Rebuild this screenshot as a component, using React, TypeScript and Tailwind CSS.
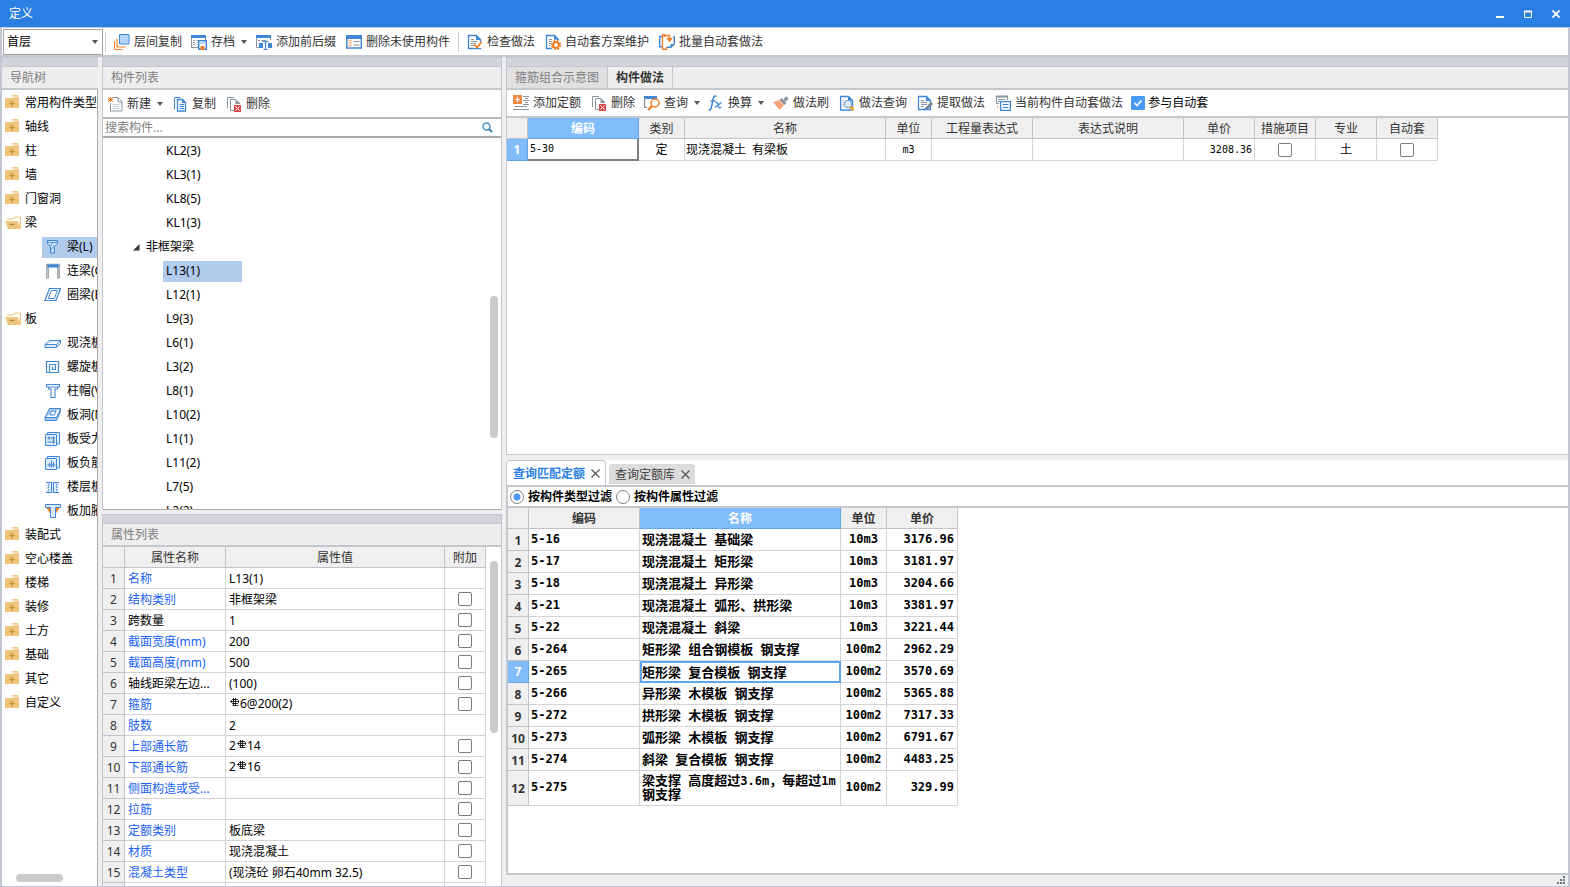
import React from "react";

const UI = "font-['Noto_Sans','Noto_Sans_CJK_SC',sans-serif]";

/* ---------- icons ---------- */

function Svg({ children, w = 16, h = 16 }: { children: React.ReactNode; w?: number; h?: number }) {
  return (
    <svg width={w} height={h} viewBox={`0 0 ${w} ${h}`} fill="none" className="shrink-0" aria-hidden="true">
      {children}
    </svg>
  );
}

const B = "#3f86d6";
const O = "#f07c24";
const G = "#8a949c";

const LayerCopyIcon = () => (
  <Svg>
    <path d="M.5 7v8.500h8" stroke={O} />
    <path d="M3 5v8h8.500" stroke={O} strokeWidth="1.200" />
    <path d="M5.500.5h9.500v9.500H5.500z" fill="#b5d6fb" stroke={B} />
  </Svg>
);
const ArchiveIcon = () => (
  <Svg>
    <path d="M.5 2v11.500H7M14.500 3v3" stroke={G} />
    <path d="M0 1h15v3H0z" fill={B} />
    <path d="M2 6.500h2M5.500 6.500h6M2 8.500h2M5.500 8.500h1M2 10.500h2M5.500 10.500h1" stroke={G} />
    <path d="M7.700 6.700h7.600v8.600H7.700z" fill="#fff" stroke={B} strokeWidth="1.400" />
    <path d="M9 7h5v3H9z" fill="#b5d6fb" />
    <path d="M9.500 12h4v4h-4z" fill={O} />
  </Svg>
);
const AffixIcon = () => (
  <Svg>
    <path d="M.5 2v11.500H3M14.500 3v3" stroke={G} />
    <path d="M0 1h15v3H0z" fill={B} />
    <path d="M2 6.500h2M5.500 6.500h5" stroke={G} />
    <path d="M3 9h4v5H3zM12 9h4v5h-4z" fill={B} />
    <path d="M6.500 7.500h2l1 1 1-1h2M9.500 8v7M7.500 15.500h4" stroke={B} strokeWidth="1.200" />
  </Svg>
);
const UnusedIcon = () => (
  <Svg>
    <path d="M.7 2v12h14.600V2" stroke={B} strokeWidth="1.400" />
    <path d="M0 1h16v4H0z" fill={B} />
    <path d="M2.500 6.500h3M2.500 9h3M2.500 11.500h3" stroke={O} strokeWidth="1.500" strokeDasharray="1 1" />
    <path d="M7.500 7.500h6M7.500 11h6" stroke={G} />
  </Svg>
);
const DocBase = () => (
  <>
    <path d="M1.500 1.500h8l4 4v9h-12z" fill="#fff" stroke={B} strokeWidth="1.300" />
    <path d="M9 1l5 5H9z" fill={B} />
    <path d="M4 5.500h3M4 7.500h6M4 9.500h6M4 11.500h3" stroke={G} />
  </>
);
const CheckDocIcon = () => (
  <Svg>
    <DocBase />
    <path d="M7 8h9v6H7z" fill="#fff" />
    <path d="M7 7.500h3M7 9.500h2" stroke={G} />
    <path d="M7.500 10.500l2.500 3 4.500-5.500" stroke={O} strokeWidth="1.800" />
  </Svg>
);
const GearDocIcon = () => (
  <Svg>
    <DocBase />
    <circle cx="11" cy="11" r="5.500" fill="#fff" />
    <circle cx="11" cy="11" r="4.200" stroke={O} strokeWidth="1.800" strokeDasharray="1.900 1.400" />
    <circle cx="11" cy="11" r="2.900" stroke={O} strokeWidth="1.800" />
  </Svg>
);
const BatchIcon = () => (
  <Svg>
    <path d="M3 2.500H.7v10.300H3" stroke={B} strokeWidth="1.400" />
    <path d="M5.500 3V.8h-2v14.400h4V13" stroke={O} strokeWidth="1.400" />
    <path d="M8 13.200h4l3.300-3.200V3H14" stroke={B} strokeWidth="1.400" />
    <path d="M5 1.500h5.500V6M8 4l2.500 3L13 4" stroke={O} strokeWidth="1.600" />
    <path d="M11.500 13.500V10H15z" fill={B} />
  </Svg>
);
const NewIcon = () => (
  <Svg>
    <path d="M6 1.500h5l4 4v9.500H3.500V7" fill="#fff" stroke={G} />
    <path d="M11 1.500V6h4" stroke={G} />
    <path d="M5.500 8.500h7M5.500 10.500h7M5.500 12.500h7" stroke="#c5ccd1" />
    <path d="M1 1l5 5M6 1L1 6M3.500 1v5M1 3.500h5" stroke={O} strokeWidth=".9" />
  </Svg>
);
const CopyIcon = () => (
  <Svg>
    <path d="M2.500 13.500v-12h6" stroke={B} />
    <path d="M5.500 3.500h5l3 3v8.500h-8z" fill="#fff" stroke={B} strokeWidth="1.300" />
    <path d="M10 3l4 4h-4z" fill={B} />
    <path d="M7.500 8.500h4.500M7.500 10.500h4.500M7.500 12.500h4.500" stroke={B} />
  </Svg>
);
const DeleteIcon = () => (
  <Svg>
    <path d="M1.500 12V1.500H8" stroke={G} />
    <path d="M8 14.500H4.500v-11H10L13.500 7v1" stroke={G} />
    <path d="M9.500 3.500L14 8H9.500z" fill={G} />
    <path d="M8 9h7v7H8z" fill="#d9494b" />
    <path d="M9.500 10.500l4 4M13.500 10.500l-4 4" stroke="#fff" />
  </Svg>
);
const AddQuotaIcon = () => (
  <Svg>
    <path d="M0 0h9v9H0z" fill="#ee8b45" />
    <path d="M2 4.500h5M4.500 2v5" stroke="#fff" strokeWidth="1.200" />
    <path d="M10 1.500h6M12 3.500h3M10 5.500h6M12 7.500h3M10 9.500h6M2 11.500h12M0 14.500h16" stroke={G} />
  </Svg>
);
const QueryIcon = () => (
  <Svg>
    <path d="M0 1h13v3H0z" fill={B} />
    <path d="M.6 3v9.400H3" stroke={G} strokeWidth="1.200" />
    <circle cx="11" cy="8" r="4" fill="#fff" stroke={O} strokeWidth="1.500" />
    <path d="M8 11l-4 4" stroke={O} strokeWidth="2.400" />
  </Svg>
);
const FxIcon = () => (
  <Svg>
    <path d="M8.500 1.500C6.800.2 5.600 1.500 5 4.500L3.500 12C3 14.500 2 15.500.5 14.700M2.500 6h5" stroke={B} strokeWidth="1.500" />
    <path d="M7.500 8c2-1.500 2.200.5 2.700 2.500s1 3 3 1.500M13.500 7.500L7 12.500" stroke={B} strokeWidth="1.300" />
  </Svg>
);
const BrushIcon = () => (
  <Svg>
    <path d="M0 7l6-2 5 5-4.500 5z" fill="#f4a27c" />
    <path d="M6.500 5L8.500 3l5 5-2 2z" fill={G} />
    <path d="M11.500 5.500l3-3" stroke={G} strokeWidth="3.200" />
  </Svg>
);
const QueryDocIcon = () => (
  <Svg>
    <path d="M1.600 1.500h7.900l4 4V15H1.600z" fill="#fff" stroke={B} strokeWidth="1.300" />
    <path d="M9 1l5 5H9z" fill={B} />
    <path d="M3.500 5.500h1M3.500 7.500h1M3.500 9.500h1M3.500 11.500h1" stroke={G} />
    <circle cx="9" cy="9" r="3.800" fill="#d9eafc" stroke="#7a97c4" />
    <path d="M11.500 12l3 3" stroke="#f5a623" strokeWidth="2.800" />
  </Svg>
);
const ExtractIcon = () => (
  <Svg>
    <DocBase />
    <path d="M8 15l1-3 5-5 2 2-5 5z" fill="#74818b" />
    <path d="M7 15.500l1-3 2 2z" fill={B} />
  </Svg>
);
const CurrentIcon = () => (
  <Svg>
    <path d="M1.500 1v7.500H4M12.500 1v4" stroke={G} />
    <path d="M1 1.500h12" stroke={G} strokeWidth="2" />
    <path d="M3 4.500h7M3 6.500h2" stroke={G} />
    <path d="M5.600 6.600h9.800v8.800H5.600z" fill="#fff" stroke={B} strokeWidth="1.200" />
    <path d="M7.500 9.500h6M7.500 12.500h6" stroke={B} />
    <path d="M2.500 10.500v2.500h2" stroke={O} strokeDasharray="1 1" />
  </Svg>
);

const FolderClosed = () => (
  <Svg>
    <path d="M8 0h4.500l1.500 1.500H6.500z" fill="#efc67c" />
    <path d="M0 3h7l1-.8h6V13H0z" fill="#efc67c" />
    <path d="M4 8.500h6M7 5.500v6" stroke="#c99a3c" strokeWidth="1.400" />
  </Svg>
);
const FolderOpen = () => (
  <Svg>
    <path d="M2 4.500l7-1L10 2h5.500v11" stroke="#efc67c" />
    <path d="M0 6h13l2 8H3z" fill="#efc67c" />
    <path d="M15.500 3v11h-2z" fill="#efc67c" />
    <path d="M4.500 9.500h5" stroke="#b98a2d" strokeWidth="1.200" />
  </Svg>
);

const PALE = "#dcebfb";
const shapes: Record<string, React.ReactNode> = {
  beam: (
    <>
      <path d="M3.500 1.500h10v3l-3 3v6.500h-4V7.500l-3-3z" fill="#c4dcf6" stroke={B} />
      <path d="M4 3.500h9M6.500 7l3-4M7 11l3-4" stroke={B} strokeWidth=".7" />
    </>
  ),
  link: (
    <>
      <path d="M3.500 15.500V2h11v13.500" stroke={G} strokeWidth="2.600" />
      <path d="M3.500 15V2h11v13" stroke="#c9ced2" strokeWidth=".8" />
      <path d="M3.500 1.500h11v3h-11z" fill={B} />
    </>
  ),
  ring: (
    <>
      <path d="M5.500 1.500h11l-4.500 12H1z" fill="#fff" stroke={B} strokeWidth="1.200" />
      <path d="M7.500 3.500h6l-3.300 8h-6z" stroke={B} />
    </>
  ),
  slab: <path d="M1 9.500l4.500-4h11v3l-4 4H1zM1 9.500h11.500l4-4M12.500 9.500v3" fill={PALE} stroke={B} strokeLinejoin="round" />,
  spiral: <path d="M2.500 14V2.500h12v11h-9v-8h6v5h-3v-3M2 13.500h3" stroke={B} strokeWidth="1.200" />,
  cap: <path d="M2.500 1.500h13v2.500h-13zM4.500 4v2h2.500v8.500h4V6h2.500V4" fill="#fff" stroke={B} strokeWidth="1.100" />,
  hole: (
    <>
      <path d="M5.500 1.500h11l-4 9H1zM1 10.500v3h11.500l4-9v-3" fill="#a9c9ee" stroke={B} />
      <path d="M7.500 4h4.500l-1.500 4H6z" fill="#fff" stroke={B} />
    </>
  ),
  force: (
    <>
      <path d="M1.500 3.500h11v11h-11zM3.500 3V1.500h12v11.500H13" fill={PALE} stroke={B} />
      <path d="M3.500 7h7.500M3.500 11h7.500M5 5.500v3M9.500 5.500v7" stroke={B} strokeWidth="1.200" />
    </>
  ),
  negative: (
    <>
      <path d="M1.500 3.500h11v11h-11zM3.500 3V1.500h12v11.500H13" fill={PALE} stroke={B} />
      <path d="M3.500 10h8M5.500 8v4M7.500 5.500v7M9.500 7v5" stroke={B} />
    </>
  ),
  strip: (
    <>
      <path d="M2 3h13v11H2z" fill={PALE} />
      <path d="M2 3.500h5.500M9.500 3.500H15M2 13.500h5.500M9.500 13.500H15M7.500 3v11M9.500 3v11" stroke={B} />
      <path d="M4.500 5v8M12.500 5v8" stroke={B} strokeDasharray="1.500 1" />
    </>
  ),
  haunch: (
    <>
      <path d="M3 5l4 6V5zM15 5l-4 6V5z" fill="#f08020" stroke="#f08020" />
      <path d="M1.500 1.500h15v3h-5v10h-5v-10h-5z" fill={PALE} stroke={B} />
    </>
  ),
};

const Caret = () => (
  <svg width="6" height="4" viewBox="0 0 6 4" className="ml-0.5 shrink-0" aria-hidden="true">
    <path d="M0 0h6L3 4z" fill="#555" />
  </svg>
);

/* ribbed bar diameter mark */
const Rebar = () => (
  <svg width="11" height="12" viewBox="0 0 11 12" fill="none" className="mb-1 inline-block" role="img" aria-label="HRB400">
    <path d="M3.500 2.500h5l1 1v2l-1 1h-5l-1-1v-2z" stroke="#000" strokeWidth=".9" />
    <path d="M4.500 1v8M6.500 1v8M1 4.500h9M3.500 8.500h6" stroke="#000" strokeWidth=".8" />
  </svg>
);

/* ---------- shared pieces ---------- */

function ToolButton({ icon, label, menu }: { icon: React.ReactNode; label: string; menu?: boolean }) {
  return (
    <button
      type="button"
      className={`flex h-5 shrink-0 items-center gap-1 whitespace-nowrap rounded-sm text-[#333] hover:bg-[#e6f0fc] ${menu ? "px-1" : "px-[5px]"}`}
    >
      {icon}
      <span>{label}</span>
      {menu && <Caret />}
    </button>
  );
}

const Divider = () => <div className="mx-[3px] h-5 w-px shrink-0 bg-[#cfcfcf]" />;
const Strip = () => <div className="h-2.5 shrink-0 border-y border-[#c3c7ce] bg-[#d3d4da]" />;

function PanelTitle({ children }: { children: React.ReactNode }) {
  return (
    <h2 className="flex h-[23px] shrink-0 items-center border-b-2 border-[#c3c7ce] bg-[#eee] px-2 pt-px font-normal text-[#808080]">
      {children}
    </h2>
  );
}

const Tick = ({ label }: { label: string }) => (
  <input
    type="checkbox"
    aria-label={label}
    className="mx-auto block size-3.5 appearance-none rounded-[2px] border border-[#7d7d7d] bg-white checked:bg-[#4a9af5]"
  />
);

/* Latin runs are set in a fixed-width face beside the Chinese text */
function Mixed({ text, small }: { text: string; small: string }) {
  return (
    <>
      {text.split(/([\x20-\x7e]+)/).map((part, i) =>
        i % 2 ? (
          <span key={i} className={`whitespace-pre font-['DejaVu_Sans_Mono',monospace] leading-none ${small}`}>
            {part}
          </span>
        ) : (
          part
        ),
      )}
    </>
  );
}

/* ---------- data ---------- */

type NavItem = { label: string; open?: boolean; children?: [string, string][] };

const nav: NavItem[] = [
  { label: "常用构件类型" },
  { label: "轴线" },
  { label: "柱" },
  { label: "墙" },
  { label: "门窗洞" },
  { label: "梁", open: true, children: [["beam", "梁(L)"], ["link", "连梁(G)"], ["ring", "圈梁(E)"]] },
  {
    label: "板",
    open: true,
    children: [
      ["slab", "现浇板"],
      ["spiral", "螺旋板"],
      ["cap", "柱帽(V)"],
      ["hole", "板洞(N)"],
      ["force", "板受力"],
      ["negative", "板负筋"],
      ["strip", "楼层板"],
      ["haunch", "板加腋"],
    ],
  },
  { label: "装配式" },
  { label: "空心楼盖" },
  { label: "楼梯" },
  { label: "装修" },
  { label: "土方" },
  { label: "基础" },
  { label: "其它" },
  { label: "自定义" },
];

const frameBeams = ["KL2(3)", "KL3(1)", "KL8(5)", "KL1(3)"];
const plainBeams = ["L13(1)", "L12(1)", "L9(3)", "L6(1)", "L3(2)", "L8(1)", "L10(2)", "L1(1)", "L11(2)", "L7(5)", "L2(2)"];

const props: [string, React.ReactNode, boolean, boolean][] = [
  ["名称", "L13(1)", true, false],
  ["结构类别", "非框架梁", true, true],
  ["跨数量", "1", false, true],
  ["截面宽度(mm)", "200", true, true],
  ["截面高度(mm)", "500", true, true],
  ["轴线距梁左边...", "(100)", false, true],
  ["箍筋", <><Rebar />6@200(2)</>, true, true],
  ["肢数", "2", true, false],
  ["上部通长筋", <>2<Rebar />14</>, true, true],
  ["下部通长筋", <>2<Rebar />16</>, true, true],
  ["侧面构造或受...", "", true, true],
  ["拉筋", "", true, true],
  ["定额类别", "板底梁", true, true],
  ["材质", "现浇混凝土", true, true],
  ["混凝土类型", "(现浇砼 卵石40mm 32.5)", true, true],
];

const quotas: [string, string, string, string][] = [
  ["5-16", "现浇混凝土 基础梁", "10m3", "3176.96"],
  ["5-17", "现浇混凝土 矩形梁", "10m3", "3181.97"],
  ["5-18", "现浇混凝土 异形梁", "10m3", "3204.66"],
  ["5-21", "现浇混凝土 弧形、拱形梁", "10m3", "3381.97"],
  ["5-22", "现浇混凝土 斜梁", "10m3", "3221.44"],
  ["5-264", "矩形梁 组合钢模板 钢支撑", "100m2", "2962.29"],
  ["5-265", "矩形梁 复合模板 钢支撑", "100m2", "3570.69"],
  ["5-266", "异形梁 木模板 钢支撑", "100m2", "5365.88"],
  ["5-272", "拱形梁 木模板 钢支撑", "100m2", "7317.33"],
  ["5-273", "弧形梁 木模板 钢支撑", "100m2", "6791.67"],
  ["5-274", "斜梁 复合模板 钢支撑", "100m2", "4483.25"],
  ["5-275", "梁支撑 高度超过3.6m，每超过1m\n钢支撑", "100m2", "329.99"],
];

const head = "border-b border-r border-[#c3c3c7] bg-[#efefef] p-0 pt-px font-normal text-[#333]";
const cell = "border-b border-r border-[#d4d4d4] p-0";
const activeHead = "border-b border-r border-[#62a5ea] bg-[#80bbfa] p-0 pt-px text-white";

/* ---------- panels ---------- */

function NavPanel() {
  return (
    <nav className="flex w-[96px] shrink-0 flex-col">
      <Strip />
      <PanelTitle>导航树</PanelTitle>
      <div className="relative min-h-0 flex-1 overflow-hidden border-r border-[#a9a9a9] bg-white pt-px">
        <ul>
          {nav.map((n) => (
            <li key={n.label}>
              <button type="button" className="flex h-6 w-full items-center gap-1 whitespace-nowrap pl-[3px] text-black">
                {n.open ? <FolderOpen /> : <FolderClosed />}
                {n.label}
              </button>
              {n.children && (
                <ul>
                  {n.children.map(([shape, label]) => (
                    <li key={label} className="flex h-6 items-center pl-10">
                      <button
                        type="button"
                        className={`flex h-[21px] flex-1 items-center gap-1.5 whitespace-nowrap pl-0.5 text-black ${shape === "beam" ? "bg-[#b1cbed]" : ""}`}
                      >
                        <Svg w={17}>{shapes[shape]}</Svg>
                        {label}
                      </button>
                    </li>
                  ))}
                </ul>
              )}
            </li>
          ))}
        </ul>
        <div className="absolute bottom-1 left-3.5 h-2 w-[47px] rounded-full bg-[#cbcbcb]" />
      </div>
    </nav>
  );
}

function ComponentPanel() {
  return (
    <section className="flex h-[453px] shrink-0 flex-col border-x border-[#c3c7ce]">
      <Strip />
      <PanelTitle>构件列表</PanelTitle>
      <div className="flex h-[27px] shrink-0 items-center bg-white">
        <ToolButton icon={<NewIcon />} label="新建" menu />
        <ToolButton icon={<CopyIcon />} label="复制" />
        <ToolButton icon={<DeleteIcon />} label="删除" />
      </div>
      <label className="flex h-[21px] shrink-0 items-center border-b-2 border-t-2 border-b-[#a9a9a9] border-t-[#b4b6ba] bg-white pr-2">
        <input
          type="text"
          aria-label="搜索构件"
          placeholder="搜索构件..."
          className="min-w-0 flex-1 pl-0.5 leading-4 outline-none placeholder:text-[#808080]"
        />
        <svg width="11" height="11" viewBox="0 0 11 11" fill="none" aria-hidden="true">
          <circle cx="4.500" cy="4.500" r="3.500" stroke="#3d95c9" strokeWidth="1.500" />
          <path d="M7 7l3 3" stroke="#2d7fb4" strokeWidth="2" />
        </svg>
      </label>
      <div className="relative min-h-0 flex-1 overflow-hidden border-b border-[#a9a9a9] bg-white pt-px text-black">
        <ul>
          {frameBeams.map((b) => (
            <li key={b} className="flex h-6 items-center pl-[60px]">
              <button type="button" className="h-[21px] w-[79px] pl-[3px] text-left">{b}</button>
            </li>
          ))}
          <li>
            <button type="button" className="flex h-6 items-center gap-1.5 pl-[30px]">
              <svg width="7" height="7" viewBox="0 0 7 7" aria-hidden="true">
                <path d="M6.500 0v6.500H0z" fill="#333" />
              </svg>
              非框架梁
            </button>
            <ul>
              {plainBeams.map((b, i) => (
                <li key={b} className="flex h-6 items-center pl-[60px]">
                  <button type="button" className={`h-[21px] w-[79px] pl-[3px] text-left ${i === 0 ? "bg-[#b1cbed]" : ""}`}>
                    {b}
                  </button>
                </li>
              ))}
            </ul>
          </li>
        </ul>
        <div className="absolute right-[3px] top-[158px] h-[142px] w-2 rounded-full bg-[#cbcbcb]" />
      </div>
    </section>
  );
}

function PropertyPanel() {
  return (
    <section className="flex min-h-0 flex-1 flex-col border-x border-[#c3c7ce]">
      <Strip />
      <PanelTitle>属性列表</PanelTitle>
      <div className="flex min-h-0 flex-1 overflow-hidden bg-white">
        <div className="min-w-0 flex-1">
          <table className="w-full table-fixed border-separate border-spacing-0">
            <colgroup>
              <col className="w-[22px]" />
              <col className="w-[101px]" />
              <col />
              <col className="w-[41px]" />
            </colgroup>
            <thead>
              <tr className="h-[21px]">
                <th className={head} />
                <th className={head}>属性名称</th>
                <th className={head}>属性值</th>
                <th className={head}>附加</th>
              </tr>
            </thead>
            <tbody>
              {props.map(([name, value, blue, extra], i) => (
                <tr key={name} className="h-[21px]">
                  <th className={head}>{i + 1}</th>
                  <td className={`${cell} whitespace-nowrap pl-[3px] pt-px ${blue ? "text-[#1a5ff5]" : "text-black"}`}>{name}</td>
                  <td className={`${cell} whitespace-nowrap pl-[3px] pt-px text-black`}>{value}</td>
                  <td className={cell}>{extra && <Tick label={`附加 ${name}`} />}</td>
                </tr>
              ))}
              <tr className="h-[21px]">
                <th className={head} />
                <td className={cell} />
                <td className={cell} />
                <td className={cell} />
              </tr>
            </tbody>
          </table>
        </div>
        <div className="w-[15px] shrink-0 pl-1 pt-3.5">
          <div className="h-[172px] w-2 rounded-full bg-[#cbcbcb]" />
        </div>
      </div>
    </section>
  );
}

function MethodPanel() {
  const mono = "font-['DejaVu_Sans_Mono',monospace] text-[10px]";
  return (
    <section className="flex h-[398px] shrink-0 flex-col border-b border-l border-[#c3c7ce]">
      <Strip />
      <div className="flex h-[23px] shrink-0 border-b-2 border-[#c3c7ce] bg-[#eee]">
        <button type="button" className="border-r border-[#c3c7ce] bg-[#e0e0e0] px-2 pt-px text-[#808080]">箍筋组合示意图</button>
        <button type="button" className="border-r border-[#c3c7ce] px-2 pt-px font-bold text-[#333]">构件做法</button>
      </div>
      <div className="flex h-[26px] shrink-0 items-center bg-white pl-px">
        <ToolButton icon={<AddQuotaIcon />} label="添加定额" />
        <ToolButton icon={<DeleteIcon />} label="删除" />
        <ToolButton icon={<QueryIcon />} label="查询" menu />
        <ToolButton icon={<FxIcon />} label="换算" menu />
        <ToolButton icon={<BrushIcon />} label="做法刷" />
        <ToolButton icon={<QueryDocIcon />} label="做法查询" />
        <ToolButton icon={<ExtractIcon />} label="提取做法" />
        <ToolButton icon={<CurrentIcon />} label="当前构件自动套做法" />
        <label className="flex items-center gap-[3px] whitespace-nowrap pl-[3px] text-black">
          <span className="relative flex">
            <input type="checkbox" defaultChecked className="peer size-3.5 appearance-none rounded-[1px] border border-[#4a9af5] bg-white checked:bg-[#4a9af5]" />
            <svg width="14" height="14" viewBox="0 0 14 14" fill="none" className="pointer-events-none absolute inset-0 hidden peer-checked:block" aria-hidden="true">
              <path d="M3.500 7l2.500 2.500 4.500-5" stroke="#fff" strokeWidth="1.600" />
            </svg>
          </span>
          参与自动套
        </label>
      </div>
      <div className="min-h-0 flex-1 overflow-hidden border-t-2 border-[#c3c7ce] bg-white">
        <table className="w-[931px] table-fixed border-separate border-spacing-0">
          <colgroup>
            <col className="w-[21px]" />
            <col className="w-[111px]" />
            <col className="w-[46px]" />
            <col className="w-[201px]" />
            <col className="w-[46px]" />
            <col className="w-[101px]" />
            <col className="w-[151px]" />
            <col className="w-[71px]" />
            <col className="w-[61px]" />
            <col className="w-[61px]" />
            <col className="w-[61px]" />
          </colgroup>
          <thead>
            <tr className="h-[21px]">
              <th className={head} />
              <th className={activeHead}>编码</th>
              {["类别", "名称", "单位", "工程量表达式", "表达式说明", "单价", "措施项目", "专业", "自动套"].map((h) => (
                <th key={h} className={head}>{h}</th>
              ))}
            </tr>
          </thead>
          <tbody className="text-black">
            <tr className="h-[22px]">
              <th className={activeHead}>1</th>
              <td className={`border-b-2 border-r-2 border-[#808080] p-0 pl-0.5 ${mono}`}>5-30</td>
              <td className={`${cell} text-center`}>定</td>
              <td className={`${cell} pl-px`}><Mixed text="现浇混凝土 有梁板" small="text-[10px]" /></td>
              <td className={`${cell} text-center ${mono}`}>m3</td>
              <td className={cell} />
              <td className={cell} />
              <td className={`${cell} pr-0.5 text-right ${mono}`}>3208.36</td>
              <td className={cell}><Tick label="措施项目" /></td>
              <td className={`${cell} text-center`}>土</td>
              <td className={cell}><Tick label="自动套" /></td>
            </tr>
          </tbody>
        </table>
      </div>
    </section>
  );
}

const Cross = () => (
  <svg width="9" height="9" viewBox="0 0 9 9" fill="none" aria-hidden="true">
    <path d="M.5.5l8 8M8.500.5l-8 8" stroke="#555" strokeWidth="1.200" />
  </svg>
);

function Radio({ label, checked }: { label: string; checked?: boolean }) {
  return (
    <label className="flex items-center gap-1 whitespace-nowrap font-bold text-black">
      <input
        type="radio"
        name="filter"
        defaultChecked={checked}
        className="size-3.5 appearance-none rounded-full border border-[#7d7d7d] bg-white checked:bg-[radial-gradient(circle,#4a9af5_3px,#fff_4px)]"
      />
      {label}
    </label>
  );
}

function QueryPanel() {
  return (
    <section className="flex min-h-0 flex-1 flex-col">
      <div className="flex h-[25px] shrink-0 items-end gap-[3px] bg-white">
        <button type="button" className="flex h-[25px] items-center gap-1.5 rounded-t-[3px] border border-b-0 border-[#c3c7ce] bg-white pl-1.5 pr-[5px] pt-px font-bold text-[#2b7fe3]">
          查询匹配定额 <Cross />
        </button>
        <button type="button" className="mb-px flex h-5 items-center gap-1.5 rounded-t-[3px] bg-[#dcdcdc] pl-1.5 pr-[5px] pt-px text-[#444]">
          查询定额库 <Cross />
        </button>
      </div>
      <div className="flex min-h-0 flex-1 flex-col border-2 border-r-0 border-[#c3c7ce] bg-white">
        <div className="flex h-[19px] shrink-0 items-center gap-1 pl-0.5">
          <Radio label="按构件类型过滤" checked />
          <Radio label="按构件属性过滤" />
        </div>
        <div className="min-h-0 flex-1 overflow-hidden border-t-2 border-[#c3c7ce]">
          <table className="w-[450px] table-fixed border-separate border-spacing-0 font-bold">
            <colgroup>
              <col className="w-[21px]" />
              <col className="w-[111px]" />
              <col className="w-[201px]" />
              <col className="w-[46px]" />
              <col className="w-[71px]" />
            </colgroup>
            <thead>
              <tr className="h-[21px]">
                <th className={head} />
                <th className={`${head} font-semibold`}>编码</th>
                <th className={activeHead}>名称</th>
                <th className={`${head} font-semibold`}>单位</th>
                <th className={`${head} font-semibold`}>单价</th>
              </tr>
            </thead>
            <tbody className="text-black">
              {quotas.map(([code, name, unit, price], i) => {
                const on = i === 6;
                const mono = "pb-0.5 font-['DejaVu_Sans_Mono',monospace] text-xs";
                return (
                  <tr key={code} className={name.includes("\n") ? "h-[35px]" : "h-[22px]"}>
                    <th className={on ? activeHead : "border-b border-r border-[#c3c3c7] bg-[#efefef] p-0 pt-0.5 font-bold text-[#333]"}>{i + 1}</th>
                    <td className={`${cell} ${mono} pl-0.5`}>{code}</td>
                    <td className={`whitespace-pre p-0 text-[13px] leading-[14px] ${on ? "border-2 border-[#62a5ea] pb-px" : "border-b border-r border-[#d4d4d4] pb-0.5 pl-0.5"}`}>
                      <Mixed text={name} small="text-xs" />
                    </td>
                    <td className={`${cell} ${mono} text-center`}>{unit}</td>
                    <td className={`${cell} ${mono} pr-[3px] text-right`}>{price}</td>
                  </tr>
                );
              })}
            </tbody>
          </table>
        </div>
      </div>
      <div className="flex h-[11px] shrink-0 items-end justify-end pb-0.5 pr-[3px]">
        <svg width="8" height="8" viewBox="0 0 8 8" aria-hidden="true">
          <path d="M6 0h2v2H6zM3 3h2v2H3zM6 3h2v2H6zM0 6h2v2H0zM3 6h2v2H3zM6 6h2v2H6z" fill="#6f757c" />
        </svg>
      </div>
    </section>
  );
}

export default function App() {
  return (
    <div className={`flex h-screen flex-col overflow-hidden bg-[#efefef] text-xs leading-4 ${UI}`}>
      <header className="flex h-7 shrink-0 items-center justify-between border-b border-[#b9cbe4] bg-[#2b7fe3] pl-[9px] pr-2.5 text-white">
        <h1>定义</h1>
        <div className="flex gap-5">
          <button type="button" aria-label="最小化">
            <svg width="8" height="8" viewBox="0 0 8 8" className="block"><path d="M0 6h8v2H0z" fill="#fff" /></svg>
          </button>
          <button type="button" aria-label="最大化">
            <svg width="8" height="8" viewBox="0 0 8 8" className="block" fill="none"><path d="M.5 1v6.500h7V1" stroke="#fff" /><path d="M0 .5h8v2H0z" fill="#fff" /></svg>
          </button>
          <button type="button" aria-label="关闭">
            <svg width="8" height="8" viewBox="0 0 8 8" className="block" fill="none"><path d="M.5.5l7 7M7.500.5l-7 7" stroke="#fff" strokeWidth="1.800" /></svg>
          </button>
        </div>
      </header>

      <div className="flex min-h-0 flex-1 flex-col border-b border-l-2 border-r-2 border-[#c3c7d2]">
        <div className="flex h-[29px] shrink-0 items-center border-b-2 border-[#c3c7ce] bg-white pl-px pt-px">
          <div className="relative">
            <select aria-label="楼层" className="block h-[26px] w-[100px] appearance-none border border-[#a3a3a3] bg-white pl-[3px] text-black">
              <option>首层</option>
            </select>
            <svg width="6" height="4" viewBox="0 0 6 4" className="pointer-events-none absolute right-[5px] top-[11px]" aria-hidden="true">
              <path d="M0 0h6L3 4z" fill="#555" />
            </svg>
          </div>
          <div className="ml-0.5 mr-[3px] h-5 w-px bg-[#cfcfcf]" />
          <ToolButton icon={<LayerCopyIcon />} label="层间复制" />
          <ToolButton icon={<ArchiveIcon />} label="存档" menu />
          <ToolButton icon={<AffixIcon />} label="添加前后缀" />
          <ToolButton icon={<UnusedIcon />} label="删除未使用构件" />
          <Divider />
          <ToolButton icon={<CheckDocIcon />} label="检查做法" />
          <ToolButton icon={<GearDocIcon />} label="自动套方案维护" />
          <ToolButton icon={<BatchIcon />} label="批量自动套做法" />
        </div>

        <div className="flex min-h-0 flex-1 gap-1">
          <NavPanel />
          <div className="flex w-[400px] shrink-0 flex-col gap-1">
            <ComponentPanel />
            <PropertyPanel />
          </div>
          <div className="flex min-w-0 flex-1 flex-col gap-[5px]">
            <MethodPanel />
            <QueryPanel />
          </div>
        </div>
      </div>
    </div>
  );
}
